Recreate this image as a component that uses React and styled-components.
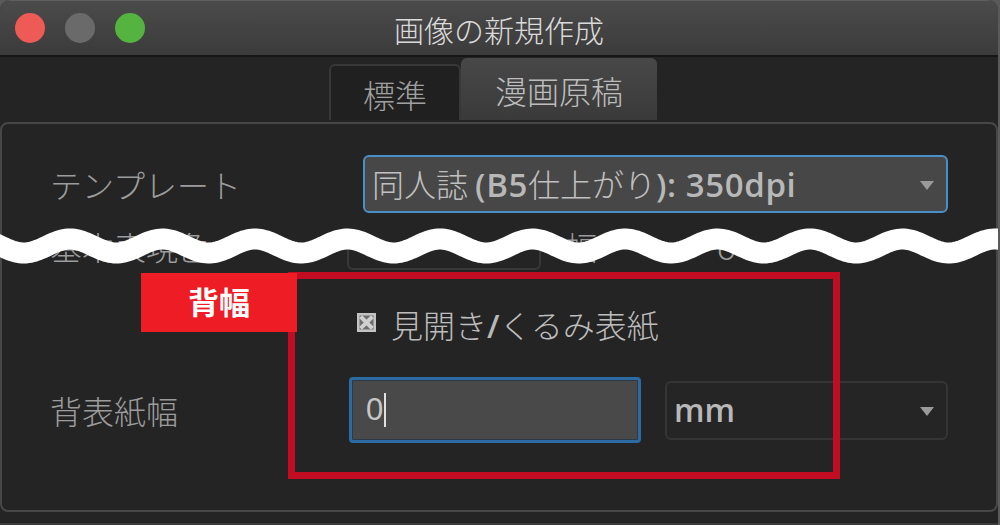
import React from 'react'
import styled, { createGlobalStyle } from 'styled-components'

const Global = createGlobalStyle`
  body {
    margin: 0;
    background: #5a5a5a;
    font-family: "Noto Sans CJK JP", "Noto Sans", sans-serif;
  }
`

const Window = styled.div`
  position: relative;
  width: 998px;
  height: 523px;
  background: #242424;
  border-radius: 10px 10px 0 0;
  border-bottom: 2px solid #3a3a3a;
  overflow: hidden;
`

const TitleBar = styled.div`
  display: grid;
  grid-template-columns: 1fr auto 1fr;
  align-items: center;
  background: linear-gradient(#4b4b4b, #3b3b3b);
  border-top: 1px solid #5e5e5e;
  border-bottom: 2px solid #161616;
  box-sizing: border-box;
  height: 57px;
`

const Lights = styled.div`
  display: flex;
  gap: 20px;
  padding-left: 15px;
`

const Light = styled.span`
  width: 30px;
  height: 30px;
  border-radius: 50%;
  background: ${p => p.color};
`

const Title = styled.div`
  font-size: 30px;
  font-weight: 300;
  color: #dadada;
  line-height: 1;
  padding-top: 1px;
`

const TabBar = styled.div`
  display: flex;
  justify-content: center;
  align-items: flex-end;
  height: 65px;
  padding-right: 12px;
`

const Tab = styled.div`
  box-sizing: border-box;
  height: ${p => (p.active ? 62 : 56)}px;
  width: ${p => (p.active ? 196 : 132)}px;
  margin-bottom: 2px;
  display: flex;
  align-items: center;
  justify-content: center;
  font-size: 32px;
  font-weight: 300;
  line-height: 1;
  padding-top: 2px;
  color: ${p => (p.active ? '#bcbcbc' : '#a0a0a0')};
  border-radius: 6px 6px 0 0;
  background: ${p => (p.active ? 'linear-gradient(#484848, #3a3a3a)' : '#202020')};
  border: ${p => (p.active ? 'none' : '2px solid #383838')};
  border-bottom: none;
`

const GroupBox = styled.div`
  box-sizing: border-box;
  height: 390px;
  border: 2px solid #474747;
  border-radius: 8px;
  padding: 31px 48px 0 48px;
  display: flex;
  flex-direction: column;
`

const Row = styled.div`
  display: grid;
  grid-template-columns: 299px 1fr;
  align-items: center;
  height: ${p => p.h}px;
  margin-top: ${p => p.mt || 0}px;
`

const Label = styled.div`
  font-size: 32px;
  font-weight: 300;
  color: #9c9c9c;
  line-height: 1;
  white-space: nowrap;
`

const Select = styled.div`
  box-sizing: border-box;
  height: ${p => p.h}px;
  margin-left: ${p => p.indent || 0}px;
  flex: ${p => (p.grow ? 1 : 'none')};
  border: 2px solid ${p => (p.focus ? '#4b8fc9' : '#353535')};
  border-radius: 6px;
  background: ${p => (p.focus ? '#474747' : '#252525')};
  display: flex;
  align-items: center;
  justify-content: space-between;
  padding: 0 12px 0 7px;
  color: #c0c0c0;
  font-size: 32px;
  font-weight: 300;
  line-height: 1;
  white-space: nowrap;
`

const Latin = styled.span`
  font-family: "Open Sans", "Liberation Sans", sans-serif;
  font-weight: 600;
  font-size: ${p => p.size || 32}px;
  letter-spacing: ${p => p.spacing || 0}px;
  color: #b8b8b8;
`

const Arrow = styled.span`
  width: 0;
  height: 0;
  border-left: 7px solid transparent;
  border-right: 7px solid transparent;
  border-top: 9px solid #9a9a9a;
  margin-top: 2px;
`

const HiddenRow = styled.div`
  display: flex;
  align-items: center;
  height: 42px;
  margin-top: 15px;
`

const HiddenBox = styled.div`
  align-self: flex-end;
  width: 190px;
  height: 34px;
  margin-left: 137px;
  border: 2px solid #383838;
  border-top: none;
  border-radius: 0 0 6px 6px;
`

const HiddenText = styled.div`
  font-size: 32px;
  font-weight: 300;
  color: #9c9c9c;
  line-height: 1;
  margin-left: ${p => p.ml}px;
  margin-top: -6px;
  white-space: nowrap;
`

const CheckLine = styled.div`
  display: flex;
  align-items: center;
  gap: 15px;
  margin-left: 8px;
  font-size: 32px;
  font-weight: 300;
  color: #bdbdbd;
  line-height: 1;
`

const CheckBox = styled.svg`
  flex: none;
  display: block;
  width: 19px;
  height: 19px;
  margin-top: -5px;
`

const Controls = styled.div`
  display: flex;
  align-items: center;
  gap: 24px;
`

const Input = styled.div`
  box-sizing: border-box;
  width: 292px;
  height: 66px;
  border: 3px solid #2b6aa3;
  border-radius: 4px;
  background: #494949;
  box-shadow: inset 0 0 0 1px #2d3a45;
  display: flex;
  align-items: center;
  padding-left: 14px;
  font-family: "Liberation Sans", sans-serif;
  font-size: 31px;
  color: #c6c6c6;
`

const Caret = styled.span`
  width: 2px;
  height: 34px;
  background: #e0e0e0;
  margin-left: 1px;
`

const Callout = styled.div`
  position: absolute;
  left: 288px;
  top: 272px;
  width: 552px;
  height: 207px;
  box-sizing: border-box;
  border: 7px solid #c20c22;
`

const CalloutTag = styled.div`
  position: absolute;
  left: 141px;
  top: 273px;
  width: 156px;
  height: 59px;
  background: #ee1c25;
  color: #ffffff;
  display: flex;
  align-items: center;
  justify-content: center;
  font-size: 31px;
  font-weight: 700;
  line-height: 1;
  padding-bottom: 4px;
  box-sizing: border-box;
`

const WaveSvg = styled.svg`
  position: absolute;
  left: 0;
  top: 222px;
`

const wavePath = (() => {
  let d = ''
  for (let x = -20; x <= 1020; x += 2) {
    const y = 24 - 7 * Math.cos((2 * Math.PI * (x - 70)) / 92.5)
    d += (x === -20 ? 'M' : 'L') + x + ' ' + y.toFixed(2) + ' '
  }
  return d
})()

const CheckIcon = () => (
  <CheckBox viewBox="0 0 19 19">
    <rect x="0" y="0" width="19" height="19" fill="#c4c4c4" />
    <rect x="2.5" y="2.5" width="14" height="14" fill="#6e6e6e" />
    <path d="M5 5 L14 14 M14 5 L5 14" stroke="#d0d0d0" strokeWidth="4" strokeLinecap="square" />
  </CheckBox>
)

const App = () => {
  return (
    <>
      <Global />
      <Window>
        <TitleBar>
          <Lights>
            <Light color="#ee5a55" />
            <Light color="#6a6a6a" />
            <Light color="#55b43f" />
          </Lights>
          <Title>画像の新規作成</Title>
          <div />
        </TitleBar>
        <TabBar>
          <Tab>標準</Tab>
          <Tab active>漫画原稿</Tab>
        </TabBar>
        <GroupBox>
          <Row h={58}>
            <Label>テンプレート</Label>
            <Select h={58} indent={14} focus>
              <span>
                同人誌 <Latin size={33} spacing={0.6}>(B5</Latin>仕上がり<Latin size={33} spacing={0.6}>): 350dpi</Latin>
              </span>
              <Arrow />
            </Select>
          </Row>
          <HiddenRow>
            <HiddenText ml={0}>基本表現色</HiddenText>
            <HiddenBox />
            <HiddenText ml={24}>幅</HiddenText>
            <HiddenText ml={120}>ô</HiddenText>
          </HiddenRow>
          <Row h={58} mt={26}>
            <div />
            <CheckLine>
              <CheckIcon />
              <span>
                見開き<Latin>/</Latin>くるみ表紙
              </span>
            </CheckLine>
          </Row>
          <Row h={66} mt={23}>
            <Label>背表紙幅</Label>
            <Controls>
              <Input>
                0<Caret />
              </Input>
              <Select h={59} grow>
                <Latin>mm</Latin>
                <Arrow />
              </Select>
            </Controls>
          </Row>
        </GroupBox>
        <WaveSvg width="1000" height="48" viewBox="0 0 1000 48">
          <path d={wavePath} fill="none" stroke="#ffffff" strokeWidth="21" />
        </WaveSvg>
        <Callout />
        <CalloutTag>背幅</CalloutTag>
      </Window>
    </>
  )
}

export default App
